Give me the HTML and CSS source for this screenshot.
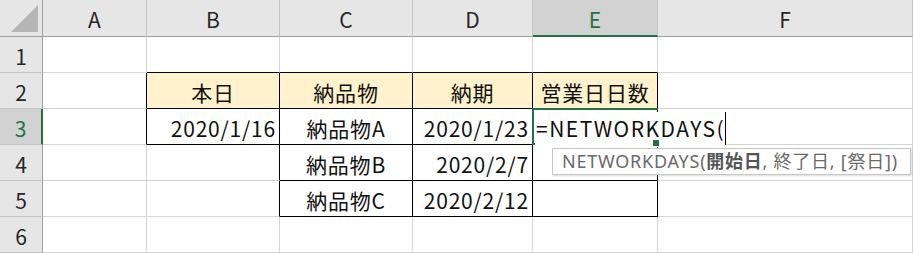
FILE: index.html
```html
<!DOCTYPE html>
<html lang="ja">
<head>
<meta charset="utf-8">
<link rel="stylesheet" href="styles.css">
</head>
<body>
<div class="sheet">
  <div class="hd corner"><span class="tri"></span></div>
  <div class="hd col">A</div>
  <div class="hd col">B</div>
  <div class="hd col">C</div>
  <div class="hd col">D</div>
  <div class="hd col sel">E</div>
  <div class="hd col">F</div>

  <div class="hd row">1</div>
  <div class="c"></div>
  <div class="c bb"></div>
  <div class="c bb"></div>
  <div class="c bb"></div>
  <div class="c bb"></div>
  <div class="c"></div>

  <div class="hd row">2</div>
  <div class="c br"></div>
  <div class="c bb br fill ctr">本日</div>
  <div class="c bb br fill ctr">納品物</div>
  <div class="c bb br fill ctr">納期</div>
  <div class="c bb br fill ctr">営業日日数</div>
  <div class="c"></div>

  <div class="hd row sel">3</div>
  <div class="c br"></div>
  <div class="c bb br rt">2020/1/16</div>
  <div class="c bb br ctr">納品物A</div>
  <div class="c bb br rt">2020/1/23</div>
  <div class="c bb br active"><span class="edit">=NETWORKDAYS(<span class="caret"></span></span><span class="handle"></span></div>
  <div class="c"></div>

  <div class="hd row">4</div>
  <div class="c"></div>
  <div class="c br"></div>
  <div class="c bb br ctr">納品物B</div>
  <div class="c bb br rt">2020/2/7</div>
  <div class="c bb br"></div>
  <div class="c"></div>

  <div class="hd row">5</div>
  <div class="c"></div>
  <div class="c br"></div>
  <div class="c bb br ctr">納品物C</div>
  <div class="c bb br rt">2020/2/12</div>
  <div class="c bb br"></div>
  <div class="c"></div>

  <div class="hd row">6</div>
  <div class="c"></div>
  <div class="c"></div>
  <div class="c"></div>
  <div class="c"></div>
  <div class="c"></div>
  <div class="c"></div>

  <div class="tip">NETWORKDAYS(<b>開始日</b>, 終了日, [祭日])</div>
</div>
</body>
</html>
```
FILE: styles.css
```css
html, body {
  margin: 0;
  padding: 0;
  background: #ffffff;
}
.sheet {
  position: relative;
  display: grid;
  grid-template-columns: 43px 104px 133px 133px 120px 125px 255px;
  grid-template-rows: 37px repeat(6, 36px);
  font-family: "Noto Sans CJK JP", "Noto Sans", sans-serif;
  font-size: 21px;
  letter-spacing: 0.8px;
  color: #111;
  overflow: hidden;
  width: 913px;
  height: 253px;
}
.c, .hd {
  box-sizing: border-box;
  border-right: 1px solid #d4d4d4;
  border-bottom: 1px solid #d4d4d4;
  display: flex;
  align-items: center;
  white-space: nowrap;
  line-height: 1;
  padding-top: 3px;
}
.hd {
  background: #e6e6e6;
  color: #262626;
  justify-content: center;
  letter-spacing: 0;
}
.hd.col {
  border-right-color: #c4c4c4;
  border-bottom: 1px solid #9e9e9e;
}
.hd.corner {
  border-right: 1px solid #9e9e9e;
  border-bottom: 1px solid #9e9e9e;
  position: relative;
}
.tri {
  position: absolute;
  right: 4px;
  bottom: 4px;
  width: 0;
  height: 0;
  border-left: 27px solid transparent;
  border-bottom: 27px solid #b5b5b5;
}
.hd.row {
  border-right: 1px solid #9e9e9e;
  border-bottom-color: #c4c4c4;
}
.hd.col.sel {
  background: #d2d2d2;
  color: #217346;
  border-bottom: 2px solid #217346;
}
.hd.row.sel {
  background: #d2d2d2;
  color: #217346;
  border-right: 2px solid #217346;
}
.bb { border-bottom-color: #000; }
.br { border-right-color: #000; }
.fill { background: #fff2cc; }
.ctr { justify-content: center; }
.rt { justify-content: flex-end; padding-right: 3px; }
.active {
  position: relative;
  overflow: visible;
  z-index: 2;
}
.active::before {
  content: "";
  position: absolute;
  left: -1px;
  top: -1px;
  right: -1px;
  bottom: -1px;
  border: 2px solid #217346;
  border-right: none;
  pointer-events: none;
}
.edit {
  position: relative;
  z-index: 1;
  display: flex;
  align-items: center;
  height: 33px;
  margin-left: 2px;
  padding-left: 1px;
  background: #fff;
  letter-spacing: 1.5px;
}
.caret {
  display: inline-block;
  width: 1px;
  height: 33px;
  background: #000;
  margin-left: 0;
}
.handle {
  position: absolute;
  right: -3px;
  bottom: -3px;
  width: 6px;
  height: 6px;
  background: #217346;
  border: 1px solid #fff;
  z-index: 3;
}
.tip {
  position: absolute;
  left: 552px;
  top: 148px;
  width: 359px;
  height: 27px;
  box-sizing: border-box;
  border: 1px solid #c6c6c6;
  box-shadow: 1px 1px 2px rgba(0,0,0,0.15);
  background: #fff;
  color: #6a6a6a;
  font-family: "Noto Sans", "Noto Sans CJK JP", sans-serif;
  font-size: 18px;
  letter-spacing: 0.75px;
  line-height: 25px;
  padding-left: 9px;
  white-space: nowrap;
  z-index: 5;
}
.tip b {
  color: #555;
  font-weight: bold;
}
```
